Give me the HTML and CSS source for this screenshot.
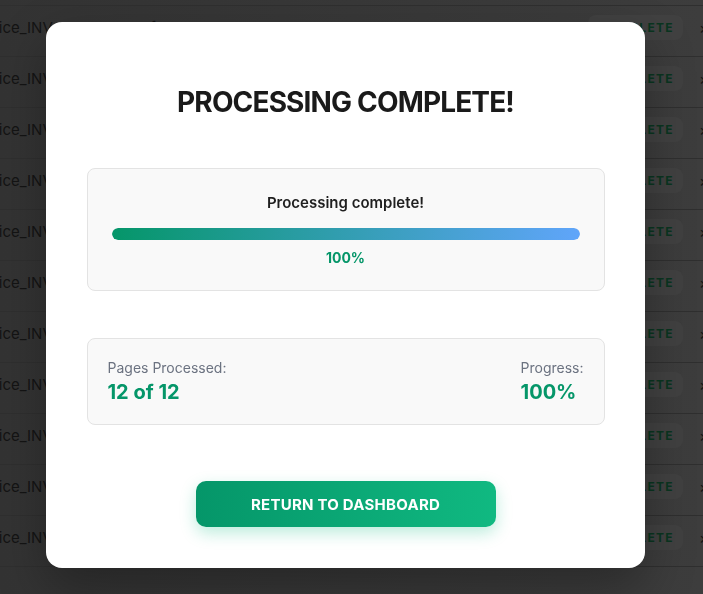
FILE: index.html
```html
<!DOCTYPE html>
<html lang="en">
<head>
<meta charset="utf-8">
<title>Processing Complete</title>
<link rel="stylesheet" href="styles.css">
</head>
<body>
<div class="page">
  <div class="table">
    <div class="row"><span class="file">Invoice_INV-2024-001.pdf</span><span class="badge">COMPLETE</span><span class="close">×</span></div>
    <div class="row"><span class="file">Invoice_INV-2024-002.pdf</span><span class="badge">COMPLETE</span><span class="close">×</span></div>
    <div class="row"><span class="file">Invoice_INV-2024-003.pdf</span><span class="badge">COMPLETE</span><span class="close">×</span></div>
    <div class="row"><span class="file">Invoice_INV-2024-004.pdf</span><span class="badge">COMPLETE</span><span class="close">×</span></div>
    <div class="row"><span class="file">Invoice_INV-2024-005.pdf</span><span class="badge">COMPLETE</span><span class="close">×</span></div>
    <div class="row"><span class="file">Invoice_INV-2024-006.pdf</span><span class="badge">COMPLETE</span><span class="close">×</span></div>
    <div class="row"><span class="file">Invoice_INV-2024-007.pdf</span><span class="badge">COMPLETE</span><span class="close">×</span></div>
    <div class="row"><span class="file">Invoice_INV-2024-008.pdf</span><span class="badge">COMPLETE</span><span class="close">×</span></div>
    <div class="row"><span class="file">Invoice_INV-2024-009.pdf</span><span class="badge">COMPLETE</span><span class="close">×</span></div>
    <div class="row"><span class="file">Invoice_INV-2024-010.pdf</span><span class="badge">COMPLETE</span><span class="close">×</span></div>
    <div class="row"><span class="file">Invoice_INV-2024-011.pdf</span><span class="badge">COMPLETE</span><span class="close">×</span></div>
  </div>
</div>
<div class="overlay">
  <div class="modal">
    <h1 class="title">PROCESSING COMPLETE!</h1>
    <div class="card progress-card">
      <div class="status">Processing complete!</div>
      <div class="track"><div class="fill" style="width:100%"></div></div>
      <div class="percent">100%</div>
    </div>
    <div class="card stats-card">
      <div class="stat">
        <div class="stat-label">Pages Processed:</div>
        <div class="stat-value">12 of 12</div>
      </div>
      <div class="stat">
        <div class="stat-label">Progress:</div>
        <div class="stat-value">100%</div>
      </div>
    </div>
    <div class="actions">
      <button class="btn">RETURN TO DASHBOARD</button>
    </div>
  </div>
</div>
</body>
</html>
```
FILE: styles.css
```css
* { box-sizing: border-box; }
html, body { margin: 0; padding: 0; }
body {
  width: 703px;
  height: 594px;
  overflow: hidden;
  font-family: Inter, "Noto Sans", sans-serif;
  background: linear-gradient(90deg, #333333, #3d3d3d);
}
.page {
  padding-top: 5px;
}
.table {
  border-bottom: 1px solid #2f2f2f;
}
.row {
  height: 51px;
  display: flex;
  align-items: center;
  padding-bottom: 7px;
  border-top: 1px solid #2f2f2f;
  white-space: nowrap;
}
.file {
  margin-left: -31px;
  font-size: 15px;
  color: #141414;
  flex: 1;
}
.badge {
  width: 95px;
  height: 25px;
  border-radius: 8px;
  background: #414141;
  color: #0a3520;
  font-size: 12px;
  font-weight: 700;
  letter-spacing: 1.3px;
  display: flex;
  align-items: center;
  justify-content: center;
  margin-right: 16px;
}
.close {
  color: #141414;
  font-size: 16px;
  width: 8px;
  margin-right: -4px;
  overflow: hidden;
}
.overlay {
  position: fixed;
  inset: 0;
  display: flex;
  align-items: flex-start;
  justify-content: center;
  padding-top: 22px;
}
.modal {
  width: 599px;
  background: #ffffff;
  border-radius: 16px;
  padding: 40px 40px 41px 41px;
  box-shadow: 0 20px 50px rgba(0,0,0,0.3);
  margin-left: -13px;
}
.title {
  margin: 23px 0 49px;
  text-align: center;
  font-size: 28px;
  font-weight: 700;
  color: #1a1a1a;
  line-height: normal;
  letter-spacing: -0.85px;
}
.card {
  background: #f9f9f9;
  border: 1px solid #e3e3e3;
  border-radius: 8px;
}
.progress-card {
  padding: 24px;
  text-align: center;
}
.status {
  font-size: 15px;
  font-weight: 600;
  color: #1f1f1f;
  margin-bottom: 16px;
}
.track {
  height: 12px;
  border-radius: 6px;
  background: #e5e7eb;
  overflow: hidden;
}
.fill {
  height: 100%;
  border-radius: 6px;
  background: linear-gradient(90deg, #059669, #60a5fa);
}
.percent {
  margin-top: 9px;
  font-size: 14px;
  font-weight: 700;
  color: #059669;
}
.stats-card {
  margin-top: 47px;
  padding: 20px;
  display: flex;
  justify-content: space-between;
}
.stat-label {
  font-size: 14px;
  color: #6b7280;
}
.stat-value {
  margin-top: 4px;
  font-size: 20px;
  font-weight: 700;
  color: #059669;
}
.actions {
  margin-top: 56px;
  display: flex;
  justify-content: center;
}
.btn {
  width: 300px;
  height: 46px;
  border: none;
  border-radius: 10px;
  background: linear-gradient(90deg, #059669, #10b981);
  color: #ffffff;
  font-family: Inter, "Noto Sans", sans-serif;
  font-size: 15px;
  font-weight: 700;
  letter-spacing: 0.25px;
  box-shadow: 0 6px 16px rgba(16,185,129,0.28);
}
```
